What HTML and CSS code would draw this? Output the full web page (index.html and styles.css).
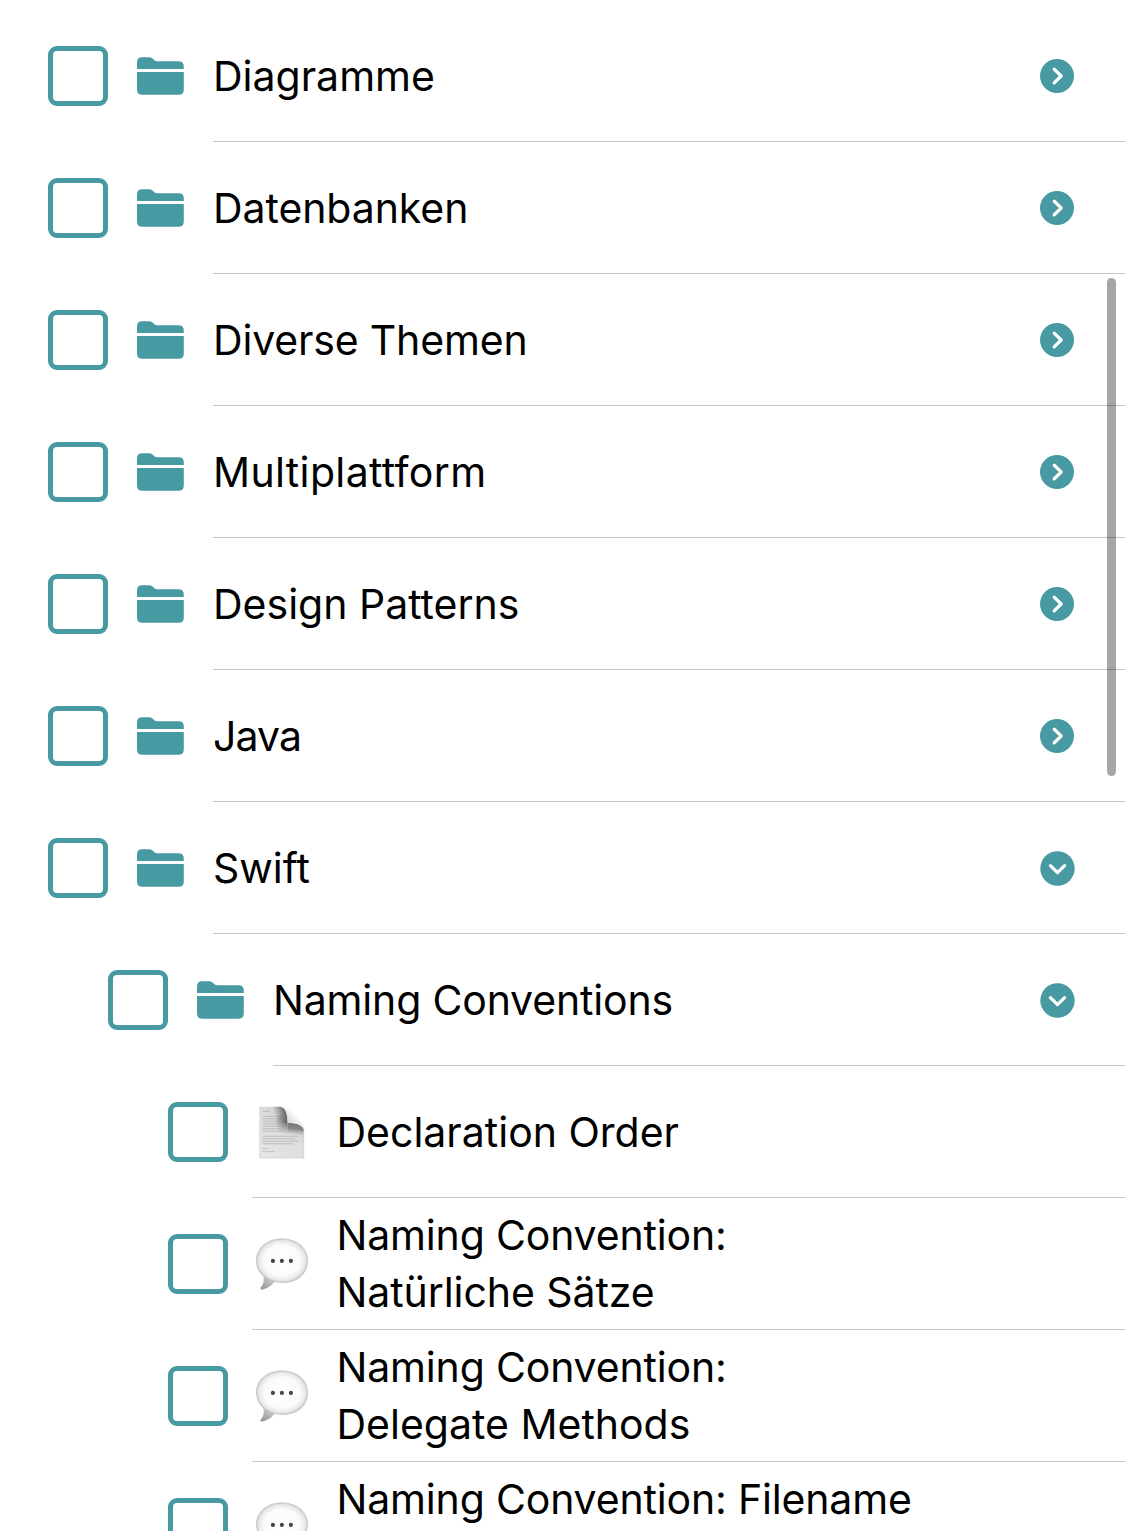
FILE: index.html
```html
<!DOCTYPE html>
<html lang="de">
<head>
<meta charset="utf-8">
<title>Themen</title>
<link rel="stylesheet" href="styles.css">
</head>
<body>
<svg class="defs" aria-hidden="true">
  <defs>
    <linearGradient id="paper" x1="0" y1="1" x2="0.7" y2="0">
      <stop offset="0" stop-color="#e6e6e6"/><stop offset="0.6" stop-color="#dedede"/><stop offset="1" stop-color="#c8c8c8"/>
    </linearGradient>
    <linearGradient id="shade-left" gradientUnits="userSpaceOnUse" x1="15" y1="8" x2="28" y2="4">
      <stop offset="0" stop-color="#555" stop-opacity="0"/><stop offset="1" stop-color="#444" stop-opacity="0.9"/>
    </linearGradient>
    <linearGradient id="shade-below" gradientUnits="userSpaceOnUse" x1="33" y1="16" x2="32" y2="28">
      <stop offset="0" stop-color="#555" stop-opacity="0.75"/><stop offset="0.5" stop-color="#555" stop-opacity="0.6"/><stop offset="1" stop-color="#777" stop-opacity="0"/>
    </linearGradient>
    <radialGradient id="shade-corner" gradientUnits="userSpaceOnUse" cx="27" cy="16" r="12">
      <stop offset="0" stop-color="#555" stop-opacity="0.75"/><stop offset="1" stop-color="#777" stop-opacity="0"/>
    </radialGradient>
    <linearGradient id="curl" gradientUnits="userSpaceOnUse" x1="28" y1="16" x2="36" y2="8">
      <stop offset="0" stop-color="#d8d8d8"/><stop offset="1" stop-color="#fafafa"/>
    </linearGradient>
    <radialGradient id="bubble" cx="0.5" cy="0.5" r="0.54">
      <stop offset="0" stop-color="#fff"/><stop offset="0.65" stop-color="#fbfbfb"/><stop offset="0.84" stop-color="#e9e9e9"/><stop offset="1" stop-color="#b8b8b8"/>
    </radialGradient>
    <linearGradient id="tail" x1="0" y1="1" x2="0.8" y2="0">
      <stop offset="0" stop-color="#909090"/><stop offset="0.5" stop-color="#b8b8b8"/><stop offset="1" stop-color="#e8e8e8"/>
    </linearGradient>
  </defs>
  <symbol id="i-folder" viewBox="0 0 48 38">
    <path d="M0 12V5.5Q0 0.3 5 0.3H12Q14 0.3 15.5 1.6L17.5 3.3Q18.7 4.2 20 4.2H41.5Q46.8 4.2 46.8 9.5V12Z"/>
    <path d="M0 15H46.8V32.5Q46.8 37.8 41.5 37.8H5.3Q0 37.8 0 32.5Z"/>
  </symbol>
  <symbol id="i-right" viewBox="0 0 36 36">
    <circle cx="17" cy="18" r="17"/><path class="chevron" d="M14.2 11.100L21.200 18L14.200 24.900"/>
  </symbol>
  <symbol id="i-down" viewBox="0 0 36 36">
    <circle cx="17.5" cy="18.5" r="17.2"/><path class="chevron" d="M10.400 15.700L17.500 22.600L24.600 15.700"/>
  </symbol>
  <symbol id="i-doc" viewBox="0 0 60 54">
    <g transform="translate(7.5 1.8)">
      <path fill="url(#paper)" d="M0 0H21Q28 1 28 16Q42 16 44.500 23V51.500H0Z"/>
      <path stroke="#999" stroke-width="0.8" opacity="0.6" d="M3 4.500H10M3 9.500H23M3 12H24M3 14.500H20M3 17H24M3 19.500H23M3 22H22M3 24.500H24M3 29.500H39M3 32H36M3 34.500H39M3 37H34M3 42H9M3 44.800H15"/>
      <path fill="url(#shade-left)" d="M14 0H21Q28 1 28 16H14Z"/>
      <path fill="url(#shade-corner)" d="M14 4H28V16H28V30H14Z"/>
      <path fill="url(#shade-below)" d="M28 16Q42 16 44.500 23V30H28Z"/>
      <path fill="url(#curl)" d="M21 0Q26 0 30 3.500L41 14.500Q44.500 18 44.500 23Q42 16 28 16Q28 1 21 0Z"/>
      <path fill="none" stroke="#d0d0d0" stroke-width="0.600" d="M0.300 0V51.200H44.200V23"/>
    </g>
  </symbol>
  <symbol id="i-bubble" viewBox="0 0 60 54">
    <g transform="translate(0 1)">
      <path fill="url(#tail)" d="M11 37Q13.500 44 8.500 50Q8 52 10.500 51.500Q19 49.500 23 43L28 37Z"/>
      <path fill="url(#bubble)" stroke="#b3b3b3" stroke-width="0.600" d="M30 0.900C45 0.900 55.500 9.800 55.500 22.500C55.500 35.500 46 44.400 31 44.400Q25 44.400 20 43Q13 41 9.500 36Q4.500 30.500 4.500 22.500C4.500 9.800 15 0.900 30 0.900Z"/>
      <g fill="#444"><circle cx="20.900" cy="22.900" r="2.100"/><circle cx="29.900" cy="22.900" r="2.100"/><circle cx="38.900" cy="22.900" r="2.100"/></g>
    </g>
  </symbol>
</svg>
<main class="list">
  <div class="row"><span class="check"></span><svg class="folder"><use href="#i-folder"/></svg><div class="content"><span class="label">Diagramme</span><svg class="toggle"><use href="#i-right"/></svg></div></div>
  <div class="row"><span class="check"></span><svg class="folder"><use href="#i-folder"/></svg><div class="content"><span class="label snug">Datenbanken</span><svg class="toggle"><use href="#i-right"/></svg></div></div>
  <div class="row"><span class="check"></span><svg class="folder"><use href="#i-folder"/></svg><div class="content"><span class="label tight">Diverse Themen</span><svg class="toggle"><use href="#i-right"/></svg></div></div>
  <div class="row"><span class="check"></span><svg class="folder"><use href="#i-folder"/></svg><div class="content"><span class="label wide">Multiplattform</span><svg class="toggle"><use href="#i-right"/></svg></div></div>
  <div class="row"><span class="check"></span><svg class="folder"><use href="#i-folder"/></svg><div class="content"><span class="label">Design Patterns</span><svg class="toggle"><use href="#i-right"/></svg></div></div>
  <div class="row"><span class="check"></span><svg class="folder"><use href="#i-folder"/></svg><div class="content"><span class="label narrow">Java</span><svg class="toggle"><use href="#i-right"/></svg></div></div>
  <div class="row"><span class="check"></span><svg class="folder"><use href="#i-folder"/></svg><div class="content"><span class="label">Swift</span><svg class="toggle"><use href="#i-down"/></svg></div></div>
  <div class="row level-1"><span class="check"></span><svg class="folder"><use href="#i-folder"/></svg><div class="content"><span class="label tight">Naming Conventions</span><svg class="toggle"><use href="#i-down"/></svg></div></div>
  <div class="row level-2"><span class="check"></span><div class="content"><svg class="emoji"><use href="#i-doc"/></svg><span class="label">Declaration Order</span></div></div>
  <div class="row level-2"><span class="check"></span><div class="content"><svg class="emoji"><use href="#i-bubble"/></svg><span class="tight">Naming Convention:<br><span class="snug">Natürliche Sätze</span></span></div></div>
  <div class="row level-2"><span class="check"></span><div class="content"><svg class="emoji"><use href="#i-bubble"/></svg><span class="tight">Naming Convention:<br><span class="even">Delegate Methods</span></span></div></div>
  <div class="row level-2"><span class="check"></span><div class="content"><svg class="emoji"><use href="#i-bubble"/></svg><span class="first-line tight">Naming Convention: Filename</span></div></div>
</main>
<div class="scrollbar"></div>
</body>
</html>
```
FILE: styles.css
```css
* { box-sizing: border-box; }
body {
  margin: 0;
  height: 1531px;
  overflow: hidden;
  position: relative;
  background: #fff;
  color: #000;
  font: 400 41px/57px Inter, "Liberation Sans", sans-serif;
}
.defs { position: absolute; width: 0; height: 0; }
.list { padding-top: 10px; }
.row { display: flex; align-items: center; height: 132px; padding-left: 48px; }
.level-1 { padding-left: 108px; }
.level-2 { padding-left: 168px; }
.check {
  flex: none;
  width: 60px;
  height: 60px;
  border: 5px solid #479aa2;
  border-radius: 9px;
}
.folder { flex: none; width: 48px; height: 38px; margin: 0 28px 0 29px; fill: #479aa2; }
.content {
  flex: 1;
  display: flex;
  align-items: center;
  height: 132px;
  border-bottom: 1px solid #c6c6c8;
  white-space: nowrap;
}
.label { padding-top: 2px; }
.even { letter-spacing: 0; }
.snug { letter-spacing: -0.08px; }
.tight { letter-spacing: -0.17px; }
.narrow { letter-spacing: -0.9px; }
.wide { letter-spacing: 0.35px; font-feature-settings: "liga" 1, "calt" 1; }
.toggle { width: 36px; height: 36px; margin: 0 49px 0 auto; fill: #479aa2; }
.chevron { fill: none; stroke: #fff; stroke-width: 3.2; stroke-linecap: round; stroke-linejoin: round; }
.level-2 .content { margin-left: 24px; }
.emoji { flex: none; width: 60px; height: 54px; margin-right: 24.5px; }
.first-line { align-self: flex-start; padding-top: 9px; }
.scrollbar {
  position: absolute;
  top: 278px;
  left: 1107px;
  width: 9px;
  height: 498px;
  border-radius: 4.5px;
  background: rgba(0, 0, 0, 0.35);
}
```
